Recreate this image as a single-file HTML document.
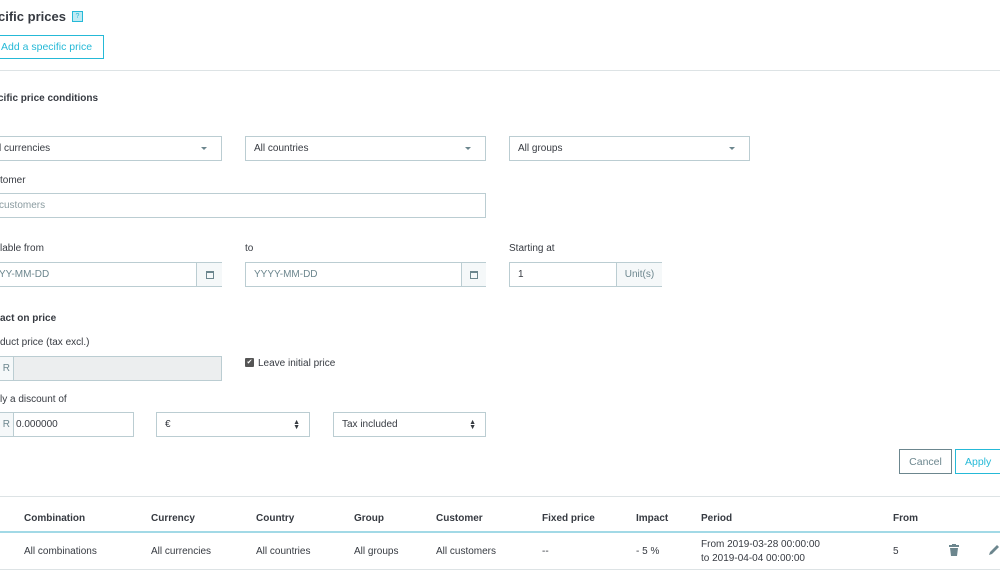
<!DOCTYPE html>
<html><head><meta charset="utf-8"><style>
*{box-sizing:border-box;margin:0;padding:0}
body{width:1000px;height:574px;overflow:hidden;background:#fff;font-family:"Liberation Sans",sans-serif;font-size:10px;color:#363a41;position:relative}
.a{position:absolute;white-space:nowrap}
.b{font-weight:bold}
.box{position:absolute;border:1px solid #bbcdd2;background:#fff;height:25px;line-height:24px;padding-left:8px}
.car{position:absolute;right:14px;top:10px;width:0;height:0;border-left:3px solid transparent;border-right:3px solid transparent;border-top:3px solid #6c868e}
.add{position:absolute;top:0;bottom:0;border-left:1px solid #bbcdd2;background:#f5f8f9;text-align:center;color:#6c868e}
.ud{position:absolute;right:9px;top:7px;font-size:7px;line-height:5px;color:#363a41}
.hr{position:absolute;left:0;right:0;height:1px;background:#dde3e5}
.th{position:absolute;top:513px;font-weight:bold}
.td{position:absolute;top:546px}
.cal{position:absolute;left:50%;top:8px;margin-left:-4px;width:8px;height:8px;border:1px solid #6c868e;border-top-width:2px}
</style></head><body>
<div class="a b" style="left:-2px;top:9px;font-size:13px">cific prices</div>
<div class="a" style="left:72px;top:11px;width:11px;height:11px;border:1px solid #25b9d7;background:#bfeaf3;color:#25b9d7;font-size:7px;text-align:center;line-height:9px">?</div>
<div class="a" style="left:-5px;top:35px;width:109px;height:24px;border:1px solid #25b9d7;color:#25b9d7;line-height:23px;padding-left:5px;font-size:10.5px">Add a specific price</div>
<div class="hr" style="top:70px"></div>
<div class="a b" style="left:-2px;top:93px">cific price conditions</div>

<div class="box" style="left:-10px;top:136px;width:232px">l currencies<span class="car"></span></div>
<div class="box" style="left:245px;top:136px;width:241px">All countries<span class="car"></span></div>
<div class="box" style="left:509px;top:136px;width:241px">All groups<span class="car"></span></div>

<div class="a" style="left:0;top:175px">tomer</div>
<div class="box" style="left:-10px;top:193px;width:496px;color:#8a9ba0">customers</div>

<div class="a" style="left:0;top:243px">lable from</div>
<div class="a" style="left:245px;top:243px">to</div>
<div class="a" style="left:509px;top:243px">Starting at</div>
<div class="box" style="left:-10px;top:262px;width:232px;color:#6c868e">YY-MM-DD<span class="add" style="left:205px;width:26px"><span class="cal"></span></span></div>
<div class="box" style="left:245px;top:262px;width:241px;color:#6c868e">YYYY-MM-DD<span class="add" style="left:215px;width:25px"><span class="cal"></span></span></div>
<div class="box" style="left:509px;top:262px;width:153px">1<span class="add" style="left:106px;width:46px;color:#6c868e">Unit(s)</span></div>

<div class="a b" style="left:0;top:313px">act on price</div>
<div class="a" style="left:0;top:337px">duct price (tax excl.)</div>
<div class="box" style="left:-10px;top:356px;width:232px;background:#eceeef;padding-left:10px;color:#6c868e"><span class="add" style="left:0;width:23px;border-left:0;border-right:1px solid #bbcdd2;background:#f5f8f9;text-align:right;padding-right:3px">R</span></div>
<div class="a" style="left:245px;top:358px;width:9px;height:9px;background:#555;border-radius:1px;color:#fff;font-size:7px;line-height:9px;text-align:center">✔</div>
<div class="a" style="left:258px;top:358px">Leave initial price</div>
<div class="a" style="left:0;top:394px">ly a discount of</div>
<div class="box" style="left:-10px;top:412px;width:144px;padding-left:25px">0.000000<span class="add" style="left:0;width:23px;border-left:0;border-right:1px solid #bbcdd2;text-align:right;padding-right:3px">R</span></div>
<div class="box" style="left:156px;top:412px;width:154px">€<span class="ud">▲<br>▼</span></div>
<div class="box" style="left:333px;top:412px;width:153px">Tax included<span class="ud">▲<br>▼</span></div>

<div class="a" style="left:899px;top:449px;width:53px;height:25px;border:1px solid #6c868e;color:#6c868e;text-align:center;line-height:24px;font-size:10.5px">Cancel</div>
<div class="a" style="left:955px;top:449px;width:55px;height:25px;border:1px solid #25b9d7;color:#25b9d7;padding-left:9px;line-height:24px;font-size:10.5px">Apply</div>

<div class="hr" style="top:496px"></div>
<div class="th" style="left:24px">Combination</div>
<div class="th" style="left:151px">Currency</div>
<div class="th" style="left:256px">Country</div>
<div class="th" style="left:354px">Group</div>
<div class="th" style="left:436px">Customer</div>
<div class="th" style="left:542px">Fixed price</div>
<div class="th" style="left:636px">Impact</div>
<div class="th" style="left:701px">Period</div>
<div class="th" style="left:893px">From</div>
<div class="hr" style="top:531px;height:2px;background:#a2d9e6"></div>
<div class="td" style="left:24px">All combinations</div>
<div class="td" style="left:151px">All currencies</div>
<div class="td" style="left:256px">All countries</div>
<div class="td" style="left:354px">All groups</div>
<div class="td" style="left:436px">All customers</div>
<div class="td" style="left:542px">--</div>
<div class="td" style="left:636px">- 5 %</div>
<div class="a" style="left:701px;top:538px;line-height:14px">From 2019-03-28 00:00:00<br>to 2019-04-04 00:00:00</div>
<div class="td" style="left:893px">5</div>
<svg class="a" style="left:949px;top:544px" width="10" height="12" viewBox="0 0 10 12"><rect x="0" y="1" width="10" height="2" fill="#6c868e"/><rect x="3" y="0" width="4" height="2" fill="#6c868e"/><path d="M1 4h8l-1 8H2z" fill="#6c868e"/></svg>
<svg class="a" style="left:988px;top:544px" width="12" height="12" viewBox="0 0 12 12"><path d="M1 11l1-3 7-7 2 2-7 7z" fill="#6c868e"/></svg>
<div class="hr" style="top:569px"></div>
</body></html>
